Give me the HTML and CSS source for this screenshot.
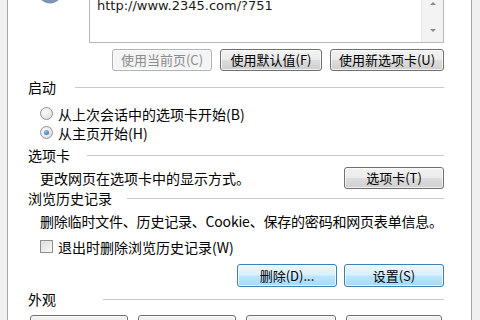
FILE: index.html
```html
<!DOCTYPE html>
<html lang="zh-CN">
<head>
    <meta charset="UTF-8">
    <meta name="viewport" content="width=device-width, initial-scale=1.0">
    <title>Internet 选项</title>
    <link rel="stylesheet" href="styles.css">
</head>
<body>
    <div class="panel">
        <div class="home">
            <div class="home-icon">
                <svg width="26" height="4" viewBox="0 0 26 4">
                    <circle cx="13" cy="-9" r="12.5" fill="#7d95b0"/>
                    <circle cx="13" cy="-10" r="10" fill="#a9bdd2"/>
                </svg>
            </div>
            <div class="urlbox">
                <span class="url">http://www.2345.com/?751</span>
                <div class="scroll">
                    <span class="arrow up"></span>
                    <span class="arrow down"></span>
                </div>
            </div>
        </div>

        <div class="home-buttons">
            <button class="btn w100" disabled>使用当前页(C)</button>
            <button class="btn w102">使用默认值(F)</button>
            <button class="btn w114">使用新选项卡(U)</button>
        </div>

        <div class="group"><span>启动</span><i class="rule"></i></div>
        <label class="option"><span class="radio"></span>从上次会话中的选项卡开始(B)</label>
        <label class="option"><span class="radio checked"></span>从主页开始(H)</label>

        <div class="group group-tabs"><span>选项卡</span><i class="rule"></i></div>
        <div class="tab-row">
            <span>更改网页在选项卡中的显示方式。</span>
            <button class="btn w100">选项卡(T)</button>
        </div>

        <div class="group group-history"><span>浏览历史记录</span><i class="rule"></i></div>
        <p class="note">删除临时文件、历史记录、Cookie、保存的密码和网页表单信息。</p>
        <label class="option check-row"><span class="check"></span>退出时删除浏览历史记录(W)</label>
        <div class="history-buttons">
            <button class="btn blue w100">删除(D)...</button>
            <button class="btn blue w100">设置(S)</button>
        </div>

        <div class="group group-look"><span>外观</span><i class="rule"></i></div>
        <div class="look-buttons">
            <button class="btn w98">颜色(O)</button>
            <button class="btn w98">语言(L)</button>
            <button class="btn w90">字体(N)</button>
            <button class="btn w96">辅助功能(E)</button>
        </div>
    </div>
</body>
</html>
```

FILE: styles.css
```css
body {
    margin: 0;
    padding: 0;
    background-color: #f0f0f0;
    font-family: "Noto Sans CJK SC", "Liberation Sans", sans-serif;
    font-size: 14px;
    color: #000;
    overflow: hidden;
}
.panel {
    margin-left: 7px;
    width: 416px;
    height: 320px;
    background: #fff;
    border-left: 1px solid #a6a6a6;
    border-right: 1px solid #a6a6a6;
    padding: 0 27px 0 20px;
}
.home {
    display: flex;
    height: 43px;
}
.home-icon {
    width: 52px;
    margin-left: 9px;
}
.home-icon svg {
    display: block;
}
.urlbox {
    flex: 1;
    display: flex;
    justify-content: space-between;
    border: 1px solid #b5b8bf;
    border-top: none;
    padding-left: 7px;
}
.url {
    font-family: "DejaVu Sans", sans-serif;
    font-size: 13px;
    line-height: 12px;
    color: #1a1a1a;
}
.scroll {
    width: 21px;
    background: #f3f3f3;
    border-left: 1px solid #e6e6e6;
    position: relative;
}
.arrow {
    position: absolute;
    left: 8px;
    width: 0;
    height: 0;
    border-left: 3px solid transparent;
    border-right: 3px solid transparent;
}
.arrow.up {
    top: 2px;
    border-bottom: 3px solid #8a8a8a;
}
.arrow.down {
    top: 29px;
    border-top: 3px solid #8a8a8a;
}
.btn {
    height: 22px;
    padding: 0;
    font-family: "Noto Sans CJK SC", sans-serif;
    font-size: 13px;
    line-height: 18px;
    color: #000;
    border: 1px solid #707070;
    border-radius: 3px;
    background: linear-gradient(#f2f2f2 0%, #ebebeb 48%, #dddddd 52%, #cfcfcf 100%);
    box-shadow: inset 0 0 0 1px rgba(255, 255, 255, 0.7);
}
.btn:disabled {
    color: #8b8b8b;
    border-color: #adb2b5;
    background: #f4f4f4;
}
.btn.blue {
    border-color: #3c7fb1;
    background: linear-gradient(#eaf6fd 0%, #d9f0fc 48%, #bee6fd 52%, #a7d9f5 100%);
}
.w90 { width: 90px; }
.w96 { width: 96px; }
.w98 { width: 98px; }
.w100 { width: 100px; }
.w102 { width: 102px; }
.w114 { width: 114px; }
.home-buttons {
    display: flex;
    justify-content: flex-end;
    gap: 8px;
    margin-top: 6px;
}
.group {
    display: flex;
    align-items: center;
    height: 18px;
    margin-top: 7px;
}
.rule {
    flex: 1;
    height: 0;
    border-top: 1px solid #c9c9c9;
    margin-left: 19px;
}
.group-tabs {
    margin-top: 4px;
}
.group-tabs .rule {
    margin-left: 17px;
}
.group-history {
    margin-top: 0;
}
.group-history .rule {
    margin-left: 15px;
}
.group-look {
    margin-top: 3px;
}
.group-look .rule {
    margin-left: 47px;
}
.option {
    display: flex;
    align-items: center;
    height: 19px;
    padding-left: 12px;
}
.group + .option {
    margin-top: 8px;
}
.radio {
    width: 11px;
    height: 11px;
    border: 1px solid #939393;
    border-radius: 50%;
    background: radial-gradient(circle at 40% 35%, #fdfdfd, #d6d6d6);
    margin-right: 5px;
    position: relative;
}
.radio.checked::after {
    content: "";
    position: absolute;
    left: 3px;
    top: 3px;
    width: 5px;
    height: 5px;
    border-radius: 50%;
    background: radial-gradient(circle at 40% 35%, #8cc7f0, #1c5fa0);
}
.tab-row {
    display: flex;
    justify-content: space-between;
    align-items: center;
    height: 22px;
    margin-top: 3px;
    padding-left: 12px;
}
.note {
    margin: 5px 0 0;
    padding-left: 12px;
    height: 18px;
    line-height: 18px;
    white-space: nowrap;
    letter-spacing: -0.2px;
}
.check-row {
    margin-top: 7px;
}
.check {
    width: 11px;
    height: 11px;
    border: 1px solid #8f8f8f;
    background: linear-gradient(135deg, #dcdcdc, #f8f8f8);
    margin-right: 5px;
}
.history-buttons {
    display: flex;
    justify-content: flex-end;
    gap: 7px;
    margin-top: 8px;
}
.history-buttons .btn {
    height: 23px;
}
.look-buttons {
    display: flex;
    gap: 10px;
    margin-top: 7px;
    margin-left: 2px;
}
```
